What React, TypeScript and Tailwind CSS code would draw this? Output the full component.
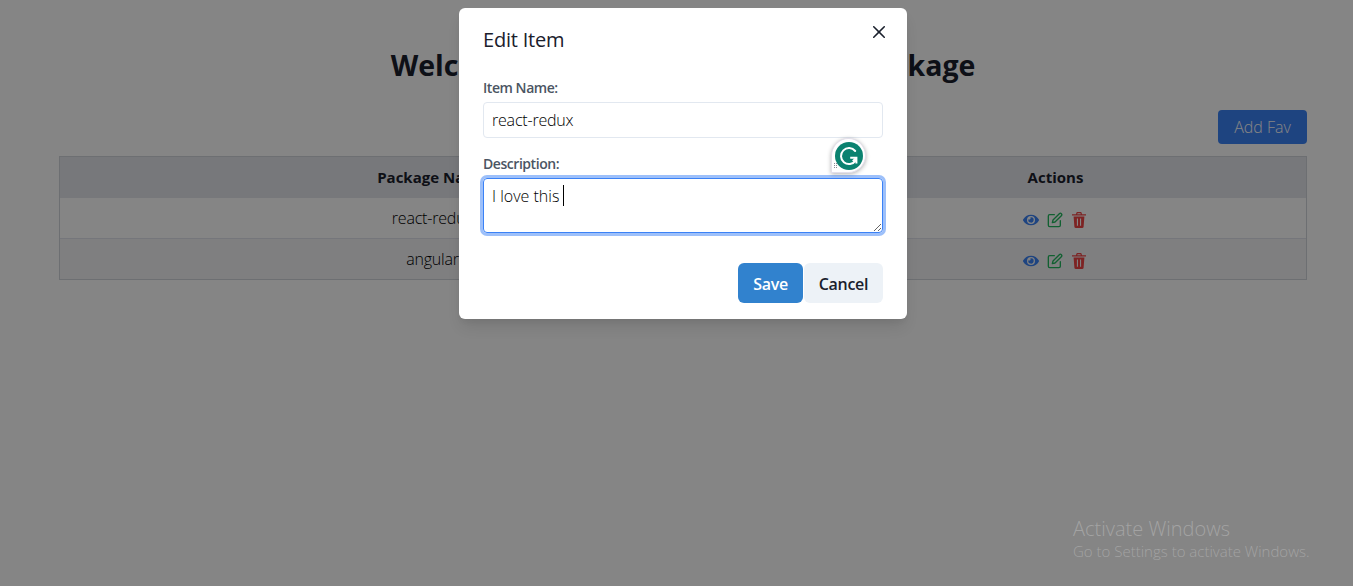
import { FaEye } from "react-icons/fa";
import { FiEdit } from "react-icons/fi";

const items = ["react-redux", "angular"];

function TrashIcon() {
  return (
    <svg width="16" height="16" viewBox="0 0 16 16" fill="currentColor">
      <path d="M1 2.2h3.9L5.8 0h4.4l.9 2.2H15v1.4H1zM6.2 2.2h3.6l-.4-1H6.6z" fillRule="evenodd" />
      <path
        d="M2.6 4.4h10.8l-.8 10.4c0 .7-.5 1.2-1.2 1.2H4.6c-.7 0-1.2-.5-1.2-1.2zM5.9 6.6v7.2h1.1V6.6zM9 6.6v7.2h1.1V6.6z"
        fillRule="evenodd"
      />
    </svg>
  );
}

function CloseIcon() {
  return (
    <svg width="12" height="12" viewBox="0 0 24 24" fill="currentColor">
      <path d="M.439 21.44a1.5 1.5 0 0 0 2.122 2.121l9.262-9.261a.25.25 0 0 1 .354 0l9.262 9.263a1.5 1.5 0 1 0 2.122-2.121L14.3 12.177a.25.25 0 0 1 0-.354l9.263-9.262A1.5 1.5 0 0 0 21.439.44L12.177 9.7a.25.25 0 0 1-.354 0L2.561.44A1.5 1.5 0 0 0 .439 2.561L9.7 11.823a.25.25 0 0 1 0 .354z" />
    </svg>
  );
}

function Assistant() {
  return (
    <div className="absolute left-[831px] top-[138px] flex h-[35px] w-[35px] items-center justify-center rounded-full rounded-bl-[3px] border border-[#e3dfea] bg-white shadow-[0_1px_4px_rgba(0,0,0,0.3)]">
      <svg width="28" height="28" viewBox="0 0 28 28" fill="none">
        <circle cx="14" cy="14" r="14" fill="#0b8270" />
        <path d="M20.2 9A8 8 0 1 0 20.6 18.6" stroke="white" strokeWidth="2" strokeLinecap="round" />
        <path d="M15.2 15.8h6.2v5.6" stroke="white" strokeWidth="2" strokeLinejoin="miter" />
        <path d="M21.4 15.8l-3.6 3.4" stroke="white" strokeWidth="2" />
      </svg>
      <svg className="absolute bottom-[2px] left-[2px]" width="4" height="7" viewBox="0 0 4 7" fill="#8a8a94">
        <path d="M0 0h1v1H0zM0 2h1v1H0zM0 4h1v1H0zM2 0h1v1H2zM2 2h1v1H2zM2 4h1v1H2z" />
      </svg>
    </div>
  );
}

export default function App() {
  return (
    <div className="relative h-[586px] overflow-hidden bg-white font-['Open_Sans',sans-serif] text-base font-light text-[#1a202c]">
      <main className="flex flex-col pl-[59px] pr-[46px] pt-[47px]">
        <h1 className="whitespace-nowrap text-center text-[28.5px] font-bold leading-9 [word-spacing:7px] text-[#1a202c]">
          Welcome to our Favorite NPM Package
        </h1>
        <button className="mt-[27px] h-[34px] w-[89px] self-end rounded bg-[#3b82f6] font-light text-white">
          Add Fav
        </button>
        <div className="mt-3 border border-[#d1d5db] text-center">
          <div className="grid h-[41px] grid-cols-[745px_1fr] items-center bg-[#e5e7eb] text-[15px] font-bold text-[#1a202c]">
            <span>Package Name</span>
            <span>Actions</span>
          </div>
          {items.map((name) => (
            <div
              key={name}
              className="grid h-[41px] grid-cols-[745px_1fr] items-center border-b border-[#e0e3ec] last:h-10 last:border-b-0 even:bg-white odd:bg-[#f3f4f6]"
            >
              <span className="tracking-[-0.2px] text-black">{name}</span>
              <span className="flex justify-center gap-2 pr-0.5 pt-1">
                <FaEye size={16} className="text-[#3b82f6]" />
                <FiEdit size={16} className="text-[#22b85e]" />
                <span className="text-[#ef4444]"><TrashIcon /></span>
              </span>
            </div>
          ))}
        </div>
      </main>

      <div className="absolute inset-0 flex items-start justify-center bg-black/48 pt-2">
        <section className="ml-[13px] flex h-[311px] w-[448px] flex-col rounded-md bg-white px-6 shadow-[0_10px_15px_-3px_rgba(0,0,0,0.1),0_4px_6px_-2px_rgba(0,0,0,0.05)]">
          <header className="flex justify-between pt-[18px]">
            <h2 className="text-xl font-medium leading-7 tracking-[-0.2px]">Edit Item</h2>
            <button className="-mr-[2px] h-3"><CloseIcon /></button>
          </header>
          <label className="mt-6 text-sm font-semibold leading-5 tracking-[-0.45px] text-[#4b5563]">Item Name:</label>
          <input
            defaultValue="react-redux"
            className="mt-1 h-9 w-full rounded border border-[#e2e8f0] px-2 font-light tracking-[-0.2px] text-black"
          />
          <label className="mt-4 text-sm font-semibold leading-5 tracking-[-0.45px] text-[#4b5563]">Description:</label>
          <div className="relative mt-1 flex">
            <textarea
              defaultValue="I love this "
              className="h-[55px] w-full resize rounded border border-[#3b82f6] px-2 pt-[5px] font-light leading-6 text-black shadow-[0_0_0_3px_rgba(59,130,246,0.5)] outline-none"
            />
            <span className="absolute left-20 top-[7px] h-[21px] w-px bg-black" />
          </div>
          <footer className="mt-[30px] flex justify-end gap-px font-semibold tracking-[-0.3px]">
            <button className="h-10 w-[65px] rounded-md bg-[#3182ce] pt-0.5 text-white">Save</button>
            <button className="h-10 w-[79px] rounded-md bg-[#edf2f7] pt-0.5 text-[#1a202c]">Cancel</button>
          </footer>
        </section>
      </div>
      <Assistant />
      <aside className="absolute left-[1073px] top-[516px] whitespace-nowrap text-[#a3a3a3]">
        <p className="text-xl leading-[26px]">Activate Windows</p>
        <p className="text-[15px] leading-[18px]">Go to Settings to activate Windows.</p>
      </aside>
    </div>
  );
}
